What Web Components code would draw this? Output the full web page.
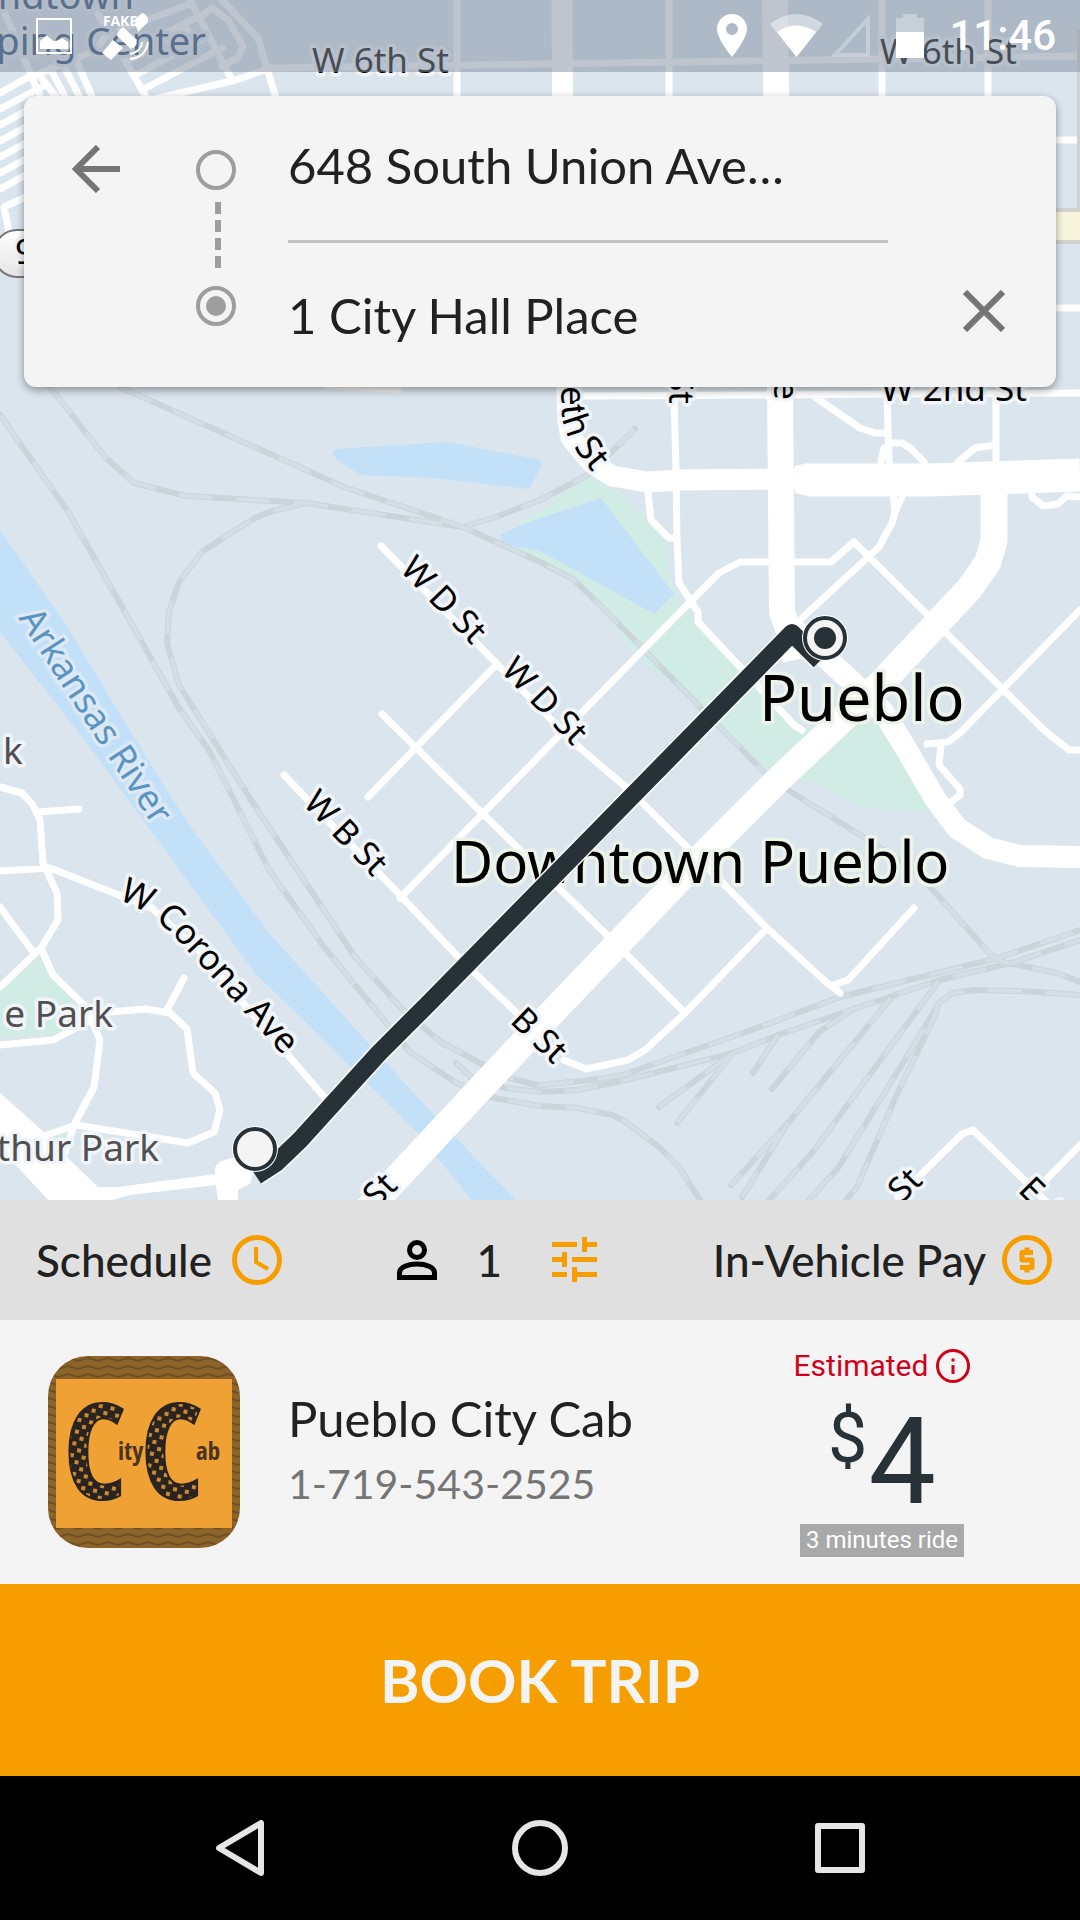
<!DOCTYPE html>
<html lang="en">
<head>
<meta charset="utf-8">
<meta name="viewport" content="width=device-width, initial-scale=1">
<title>Book a trip</title>
<style>
  html, body { margin: 0; height: 100%; }
  body { font-family: Lato, "Noto Sans", sans-serif; color: #212121; background: #000; }
</style>
</head>
<body>
<booking-screen></booking-screen>

<script>
const define = (name, html) => {
  const template = document.createElement('template');
  template.innerHTML = html;
  customElements.define(name, class extends HTMLElement {
    constructor() {
      super();
      this.attachShadow({ mode: 'open' }).append(template.content.cloneNode(true));
    }
  });
};

const reset = `
  *, *::before { box-sizing: border-box; }
  svg { display: block; flex: none; }
  button { font: inherit; color: inherit; background: none; border: 0; padding: 0; margin: 0; cursor: pointer; }
`;

/* ---------- Street map ---------- */
const rails = [
  'M0 415 69 513 179 708 210 752 234 800 269 870 324 947 410 1052 455 1082 489 1097 540 1106 578 1108 612 1115 626 1122 659 1147 679 1167 700 1200',
  'M50 387 105 457 134 483 186 496 306 503 463 527 496 517 540 500 588 475 635 429',
  'M120 387 344 487 463 527 540 562 573 579 602 607 764 772 788 790 860 835 915 870 991 955 1003 962 1057 973 1080 982',
  'M306 503 269 512 253 519 203 551 179 582 169 612 167 643 179 685 251 800 355 957 403 1010 441 1042 480 1063 510 1078 540 1086',
  'M540 1085 592 1080 623 1075 660 1062 760 1027 840 997 998 958 1080 930',
  'M456 1063 472 1078 506 1088 540 1092 578 1090 626 1080 733 1053 778 1035 857 1008 939 980 1015 962 1080 940',
  'M733 1053 659 1107', 'M733 1053 677 1123', 'M778 1035 753 1073',
  'M855 1008 819 1032 772 1089', 'M891 998 788 1123 731 1185', 'M788 1123 742 1197',
  'M938 982 871 1073 812 1153 769 1200',
  'M1080 995 1022 991 974 990 953 993 939 1003 919 1037 838 1168 809 1200',
  'M939 1003 933 1020 898 1092 857 1187 846 1200'
].join('');

const streets = [
  'M272 68 1080 56', 'M457 0V100', 'M669 0V100', 'M882 0V100', 'M988 0V100', 'M1050 140H1080', 'M1050 308H1080',
  'M580 396 1080 393', 'M674 396 676 470 677 540 679 583 698 612 698 622 743 670 795 726 802 730',
  'M887 396 889 460 893 493 895 512 892 523 879 547 802 618', 'M902 497 895 512', 'M996 396V460',
  'M815 397 860 428 875 433H888', 'M881 462 884 448 891 443H902L910 448 924 462', 'M958 462 975 448 995 445',
  'M648 492 651 520 669 538H676', 'M1032 493V497L1043 506 1058 504 1067 496 1080 497',
  'M831 562 H740 L719 573 692 600 400 898', 'M831 562 854 542 943 630 1044 730 1069 750H1080',
  'M1080 610 960 733 948 742 927 744', 'M941 745 939 765 960 789V795L950 803',
  'M381 546 496 663 574 743 626 787 688 848 767 928 826 982 840 993', 'M833 985 848 980 914 908',
  'M767 928 685 1013 645 1050 628 1060 586 1069 564 1060', 'M382 714 482 813 609 937 685 1013',
  'M496 665 368 797', 'M284 775 327 820 400 895 461 960 520 1016',
  'M0 871 50 868 152 908 200 952 238 997 325 1098',
  'M0 787 22 793 33 805 40 820 43 863 57 893 58 920 41 948 0 987', 'M38 812 79 809',
  'M41 948 53 975 86 1007 100 1040 94 1087 74 1125 65 1153', 'M0 907 34 953', 'M0 1045 53 1040 86 1023',
  'M86 1014 110 1012 145 1009 170 1013 187 1029 193 1073 215 1093 220 1110 214 1132 188 1143 76 1125 41 1137',
  'M184 978 167 1010', 'M898 1197 962 1134 973 1130 1060 1215', 'M1040 1186 1080 1145',
  /* parking rows and lanes round the shopping centre */
  'M-4 -8 33 80 60 140', 'M0 93 32 75', 'M0 109 44 86', 'M0 125 48 99', 'M0 141 48 115', 'M0 157 48 131', 'M0 173 48 147', 'M0 189 48 163',
  'M30 195 4 207 10 238', 'M34 76 96 50 104 38', 'M40 76 66 110', 'M50 68 72 110', 'M64 66 86 110', 'M76 60 92 96',
  'M98 14 148 100', 'M130 60 188 30', 'M136 75 208 36', 'M142 90 222 48', 'M150 100 236 80 270 68',
  'M190 0 232 80', 'M204 14 212 8 228 20 243 46 238 58 222 66', 'M222 0 258 38 276 98', 'M120 30 190 4', 'M140 46 196 18'
].join('');

define('street-map', `
<style>
  ${reset}
  :host { display: block; background: #dbe5ed; overflow: hidden; }
  svg { width: 100%; height: 100%; }
  text { font-family: "Noto Sans", sans-serif; font-size: 35px; fill: #000; stroke: #f1f5f9; stroke-width: 7; stroke-linejoin: round; paint-order: stroke; }
  .small { font-size: 34px; }
  .muted { fill: #505050; font-size: 37px; }
  .shop { fill: #2b4a72; font-size: 38px; stroke: #e3ebf2; }
  .river { fill: #5b93c2; stroke: #dbe9f5; font-size: 36px; }
  .city { font-size: 63px; stroke: #ecf4ea; }
  .district { font-size: 58px; stroke: #ecf4ea; }
</style>
<svg viewBox="0 0 1080 1200" preserveAspectRatio="xMidYMin slice" role="img" aria-label="Map of downtown Pueblo with the trip route">
  <defs>
    <path id="elizabeth" d="M561 200V400C561 440 580 456 612 496"/>
    <path id="corona" d="M118 899 150 914 172 934 222 988 300 1074"/>
    <linearGradient id="shield" x2="0" y2="1"><stop offset="0" stop-color="#fff"/><stop offset="1" stop-color="#e4e4e4"/></linearGradient>
  </defs>
  <g fill="#d1ece4">
    <path d="M588 477 619 492 667 540 669 580 692 620 753 673 802 730 860 717 884 727 936 805 927 811 862 808 846 799 812 780 781 780 705 713 633 652 602 612 573 580 540 560 517 548 520 524 540 511Z"/>
    <path d="M38 957 0 992V1038L62 1033 77 1007 50 973Z"/><path d="M46 1138 74 1130 60 1155Z"/>
  </g>
  <g fill="#c2e0f8">
    <path d="M0 530 65 623 160 780 193 830 269 933 370 1045 432 1113 516 1200H472L415 1130 255 973 165 850 86 742 0 632Z"/>
    <path d="M336 449 448 442 540 460 542 465 529 489 434 478 361 475 337 460Q331 453 336 449Z"/>
    <path d="M503 533 540 518 601 498 674 594 654 614 540 551 506 545Q497 538 503 533Z"/>
  </g>
  <path d="M323 380H405L400 393 325 389Z" fill="#f3f0ef"/>
  <path d="${rails}" fill="none" stroke="#cad5da" stroke-width="6" stroke-linecap="round" stroke-linejoin="round"/>
  <path d="${rails}" fill="none" stroke="#d2dfe5" stroke-width="4" stroke-dasharray="34 24" stroke-linejoin="round"/>
  <g fill="none" stroke="#fff" stroke-linejoin="round">
    <path d="${streets}" stroke-width="7" stroke-linecap="round"/>
    <path d="M562 0 564 330 567 387 568 420 571 438 592 463 612 476 647 482 678 480 810 479" stroke-width="21"/>
    <path d="M795 466 808 463V496L795 493Z" fill="#fff" stroke="none"/>
    <path d="M807 480 930 480 1080 475" stroke-width="33"/>
    <path d="M775 0 780 387 782 612 789 632 795 660" stroke-width="26"/>
    <path d="M792 627 850 680 884 713 905 747 936 800 957 828 988 848 1020 856 1080 857" stroke-width="22"/>
    <path d="M994 480V540L988 562 970 588 884 680 778 780 698 860 540 1025 365 1212" stroke-width="27"/>
  </g>
  <path d="M0 1093 45 1133 70 1160 98 1187H118L215 1174V1168Q217 1162 225 1160L260 1150 250 1184 238 1190V1200H218L216 1185 130 1195 112 1200H48L0 1148Z" fill="#fff"/>
  <path d="M1050 226H1080" stroke="#d2d2cf" stroke-width="36"/><path d="M1050 226H1080" stroke="#f7f4dc" stroke-width="28"/>
  <path d="M1079 30V208" stroke="#d2d2cf" stroke-width="4"/>
  <rect x="-6" y="230" width="100" height="47" rx="23" fill="url(#shield)" stroke="#777" stroke-width="2"/>

  <text x="15" y="264">9</text>
  <text class="shop" x="134" y="9" text-anchor="end">ndtown</text>
  <text class="shop" x="206" y="55" text-anchor="end">ping Center</text>
  <text x="312" y="73">W 6th St</text>
  <text x="880" y="64">W 6th St</text>
  <text x="881" y="401">W 2nd St</text>
  <text><textPath href="#elizabeth" startOffset="186">eth St</textPath></text>
  <text transform="translate(669 404) rotate(90)" text-anchor="end">St</text>
  <text transform="translate(774 400) rotate(90)" text-anchor="end">e</text>
  <text class="small" transform="translate(399 570) rotate(46)">W D St</text>
  <text class="small" transform="translate(500 671) rotate(46)">W D St</text>
  <text class="small" transform="translate(302 804) rotate(46)">W B St</text>
  <text class="small" transform="translate(509 1022) rotate(44)">B St</text>
  <text class="small" transform="translate(377 1209) rotate(-45)">St</text>
  <text class="small" transform="translate(902 1204) rotate(-45)">St</text>
  <text class="small" transform="translate(1017 1191) rotate(45)">E A</text>
  <text><textPath href="#corona">W Corona Ave</textPath></text>
  <text class="river" transform="translate(18 618) rotate(57)">Arkansas River</text>
  <text class="muted" x="3" y="764">k</text>
  <text class="muted" x="113" y="1027" text-anchor="end">e Park</text>
  <text class="muted" x="159" y="1161" text-anchor="end">thur Park</text>
  <text class="city" x="759" y="721">Pueblo</text>
  <text class="district" x="451" y="883">Downtown Pueblo</text>

  <g fill="none" stroke-linejoin="round">
    <path d="M820 661 792 633 540 890 430 1002 379 1053 300 1140 276 1163 256 1176" stroke="#fff" stroke-width="21"/>
    <path d="M820 661 792 633 540 890 430 1002 379 1053 300 1140 276 1163 256 1176" stroke="#263238" stroke-width="18"/>
  </g>
  <g fill="#f4f4f4" stroke="#263238" stroke-width="4">
    <circle cx="825" cy="638" r="23" fill="#fff" stroke="none"/><circle cx="825" cy="638" r="20"/>
    <circle cx="825" cy="638" r="11" fill="#263238" stroke="none"/>
    <circle cx="255" cy="1149" r="23" fill="#fff" stroke="none"/><circle cx="255" cy="1149" r="20"/>
  </g>
</svg>`);

/* ---------- Status bar ---------- */
define('status-bar', `
<style>
  ${reset}
  :host { display: flex; align-items: center; justify-content: space-between; height: 72px; padding: 0 24px 0 36px; background: rgba(132,146,162,.53); color: #fff; }
  div { display: flex; align-items: center; }
  .left { gap: 30px; }
  text { font: bold 14px "Noto Sans", sans-serif; }
  time { font: 500 42px/48px Roboto, sans-serif; margin-left: 24px; }
</style>
<div class="left">
  <svg width="36" height="36" viewBox="0 0 36 36"><rect x="1" y="1" width="34" height="34" fill="none" stroke="#fff" stroke-width="2"/><path d="M4 31V23L11 17 17 23H20L26 20 32 24V31Z" fill="#fff"/></svg>
  <svg width="50" height="48" viewBox="0 0 50 48" fill="#fff">
    <text x="1" y="14">FAKE</text>
    <path d="M32 8 40 1Q44 1 46 7V10L36 20Z"/><path d="M21 15 35 28Q32 36 28 36L15 24Q15 19 21 15Z"/><path d="M11 28 21 36 9 48 0 41Z"/>
    <path d="M34 30q-1 5-6 6M40 30q-1 10-12 12M46 30q-2 15-18 17" fill="none" stroke="#fff" stroke-width="2"/>
  </svg>
</div>
<div>
  <svg width="50" height="44" viewBox="0 0 50 44"><path d="M15 0C6 0 0 7 0 15 0 25 15 43 15 43S30 25 30 15C30 7 24 0 15 0ZM15 21a6 6 0 1 1 0-12 6 6 0 0 1 0 12Z" fill="#fff"/></svg>
  <svg width="60" height="44" viewBox="0 0 60 44"><path d="M3 10Q29-10 56 10L29.500 43Z" fill="#fff" opacity=".45"/><path d="M10 18Q29 5 49 18L29.500 43Z" fill="#fff"/></svg>
  <svg width="68" height="44" viewBox="0 0 68 44"><path d="M8 41H41V5Z" fill="none" stroke="#c3ced7" stroke-width="4"/></svg>
  <svg width="30" height="44" viewBox="0 0 30 44"><path d="M1 4H8V0H22V4H29V44H1Z" fill="#c5d0d8"/><path d="M1 18H29V44H1Z" fill="#fff"/></svg>
  <time datetime="11:46">11:46</time>
</div>`);

/* ---------- Pickup and drop-off ---------- */
define('route-card', `
<style>
  ${reset}
  :host { display: grid; grid-template-columns: 144px 96px minmax(0, 1fr) 168px; margin: 24px; height: 291px; border-radius: 12px; background: #f4f4f4; box-shadow: 0 3px 8px rgba(0,0,0,.38); }
  button { display: flex; align-items: center; justify-content: center; height: 146px; }
  .close { align-self: end; height: 152px; padding-left: 24px; }
  .rail { justify-self: center; margin-top: 52px; }
  .fields { display: flex; flex-direction: column; padding-left: 24px; }
  input { font: inherit; font-size: 49px; line-height: 60px; color: #212121; width: 100%; height: 144px; border: 0; padding: 0 0 6px; margin: 0; background: none; outline: 0; }
  input + input { border-top: 3px solid #c1c1c1; height: 147px; padding: 0; }
</style>
<button type="button" aria-label="Back">
  <svg width="48" height="48" viewBox="0 0 48 48" fill="none" stroke="#757575" stroke-width="6"><path d="M48 24H4M26 2 4 24 26 46"/></svg>
</button>
<svg class="rail" width="42" height="180" viewBox="0 0 42 180" fill="none" stroke="#9e9e9e" stroke-width="4">
  <circle cx="21" cy="22" r="18"/><circle cx="21" cy="158" r="18"/><circle cx="21" cy="158" r="10" fill="#9e9e9e" stroke="none"/>
  <path d="M23 54V120" stroke-width="6" stroke-dasharray="12 6"/>
</svg>
<div class="fields">
  <input type="text" aria-label="Pickup address" value="648 South Union Ave…">
  <input type="text" aria-label="Drop-off address" value="1 City Hall Place">
</div>
<button class="close" type="button" aria-label="Clear drop-off">
  <svg width="42" height="42" viewBox="0 0 42 42" stroke="#757575" stroke-width="6"><path d="M2 2 40 40M40 2 2 40"/></svg>
</button>`);

/* ---------- Trip options ---------- */
define('trip-options', `
<style>
  ${reset}
  :host { display: flex; align-items: center; justify-content: space-between; height: 120px; padding: 0 28px 0 36px; background: #e0e0e0; font-size: 44px; font-weight: 500; line-height: 56px; }
  div, button { display: flex; align-items: center; }
  button { height: 120px; gap: 20px; }
  div { gap: 50px; }
  .people { gap: 40px; }
  .pay { gap: 16px; }
</style>
<button type="button">Schedule
  <svg width="50" height="50" viewBox="0 0 50 50" fill="none" stroke="#f69e00" stroke-width="5"><circle cx="25" cy="25" r="22.500"/><path d="M24 12V27L36 34" stroke-width="4"/></svg>
</button>
<div>
  <button class="people" type="button" aria-label="Passengers: 1">
    <svg width="40" height="40" viewBox="0 0 40 40" fill="none" stroke="#000" stroke-width="5"><circle cx="20" cy="10" r="7.500"/><path d="M2.500 37.500V33C2.500 21 37.500 21 37.500 33V37.500Z"/></svg>
    <span>1</span>
  </button>
  <button type="button" aria-label="Trip filters">
    <svg width="46" height="46" viewBox="0 0 46 46" fill="#f69e00"><path d="M0 5H25V10H0ZM30 0H35V5H45V10H35V15H30ZM0 20H10V15H15V30H10V25H0ZM20 20H45V25H20ZM0 35H15V40H0ZM20 30H25V35H45V40H25V45H20Z"/></svg>
  </button>
</div>
<button class="pay" type="button">In-Vehicle Pay
  <svg width="50" height="50" viewBox="0 0 50 50"><circle cx="25" cy="25" r="22.500" fill="none" stroke="#f69e00" stroke-width="5"/><path d="M31 17.500H20V25H30V32.500H18M25 12.500V17M25 33V37.500" fill="none" stroke="#f69e00" stroke-width="5" stroke-linejoin="round"/></svg>
</button>`);

/* ---------- Company badge ---------- */
define('cab-logo', `
<style>
  ${reset}
  :host { display: block; width: 192px; height: 192px; border-radius: 40px; overflow: hidden; }
  text { font-family: "Liberation Sans Narrow", "Open Sans Condensed", "DejaVu Sans Condensed", sans-serif; font-weight: bold; }
</style>
<svg width="192" height="192" viewBox="0 0 192 192" role="img" aria-label="City Cab">
  <defs>
    <pattern id="weave" width="20" height="8" patternUnits="userSpaceOnUse"><rect width="20" height="8" fill="#8c6329"/><path d="M0 2 10 5 20 2" fill="none" stroke="#6e4f24" stroke-width="2"/></pattern>
    <pattern id="check" width="12" height="12" patternUnits="userSpaceOnUse" patternTransform="rotate(12)"><rect width="12" height="12" fill="#2b2320"/><rect width="4" height="4" fill="#c98b32"/><rect x="6" y="6" width="4" height="4" fill="#c98b32"/></pattern>
  </defs>
  <rect width="192" height="192" fill="url(#weave)"/>
  <rect x="8" y="23" width="176" height="149" fill="#efa233"/>
  <g fill="url(#check)" stroke="#2b2320" stroke-width="2" font-size="132"><text x="16" y="143">C</text><text x="93" y="143">C</text></g>
  <g fill="#4a3320" font-size="25"><text x="70" y="104">ity</text><text x="148" y="104">ab</text></g>
</svg>`);

/* ---------- Fare offer ---------- */
define('cab-offer', `
<style>
  ${reset}
  :host { display: flex; align-items: center; height: 264px; padding-left: 48px; background: #f4f4f4; }
  .who { flex: 1; min-width: 0; padding-left: 48px; }
  h2 { margin: 0; font-size: 49px; font-weight: 400; line-height: 64px; }
  .who a { display: block; font-size: 41px; line-height: 68px; color: #757575; text-decoration: none; }
  .fare { width: 396px; display: flex; flex-direction: column; align-items: center; font-family: Roboto, sans-serif; }
  .est { display: flex; align-items: center; gap: 8px; color: #d0021b; font-size: 30px; line-height: 36px; }
  .price { display: flex; align-items: flex-start; gap: 1px; color: #263238; height: 140px; margin: 0; padding-top: 6px; }
  .price span { font-size: 70px; line-height: 96px; }
  .price strong { font-size: 120px; font-weight: 400; line-height: 144px; }
  .ride { background: #a9a9a9; color: #fff; font-size: 24px; line-height: 33px; padding: 0 6px; }
</style>
<cab-logo></cab-logo>
<div class="who">
  <h2>Pueblo City Cab</h2>
  <a href="tel:1-719-543-2525">1-719-543-2525</a>
</div>
<div class="fare">
  <button class="est" type="button">Estimated
    <svg width="34" height="34" viewBox="0 0 34 34" fill="none" stroke="#d0021b" stroke-width="3"><circle cx="17" cy="17" r="15.500"/><path d="M17 9.500V12.500M17 16V25"/></svg>
  </button>
  <p class="price"><span>$</span><strong>4</strong></p>
  <div class="ride">3 minutes ride</div>
</div>`);

define('book-button', `
<style>
  ${reset}
  :host { display: block; }
  button { display: block; width: 100%; height: 192px; background: #f69e00; color: #f4f4f4; font-size: 60px; font-weight: 700; line-height: 72px; }
</style>
<button type="button"><slot></slot></button>`);

/* ---------- System navigation ---------- */
define('system-nav', `
<style>
  ${reset}
  :host { display: flex; height: 144px; padding: 0 90px; background: #000; }
  button { flex: 1; display: flex; align-items: center; justify-content: center; }
  svg { fill: none; stroke: #e6e6e6; stroke-width: 6; stroke-linejoin: round; }
</style>
<button type="button" aria-label="Back"><svg width="56" height="56" viewBox="0 0 56 56"><path d="M49 3V53L7 28Z"/></svg></button>
<button type="button" aria-label="Home"><svg width="56" height="56" viewBox="0 0 56 56"><circle cx="28" cy="28" r="25"/></svg></button>
<button type="button" aria-label="Recent apps"><svg width="50" height="50" viewBox="0 0 50 50"><rect x="3" y="3" width="44" height="44"/></svg></button>`);

define('booking-screen', `
<style>
  ${reset}
  :host { display: flex; flex-direction: column; min-height: 100vh; }
  main { flex: 1; display: grid; min-height: 480px; }
  main > * { grid-area: 1 / 1; min-width: 0; }
  street-map { height: 0; min-height: 100%; }
  .over { position: relative; z-index: 1; }
</style>
<main>
  <street-map></street-map>
  <div class="over"><status-bar></status-bar><route-card></route-card></div>
</main>
<trip-options></trip-options>
<cab-offer></cab-offer>
<book-button>BOOK TRIP</book-button>
<system-nav></system-nav>`);
</script>
</body>
</html>
